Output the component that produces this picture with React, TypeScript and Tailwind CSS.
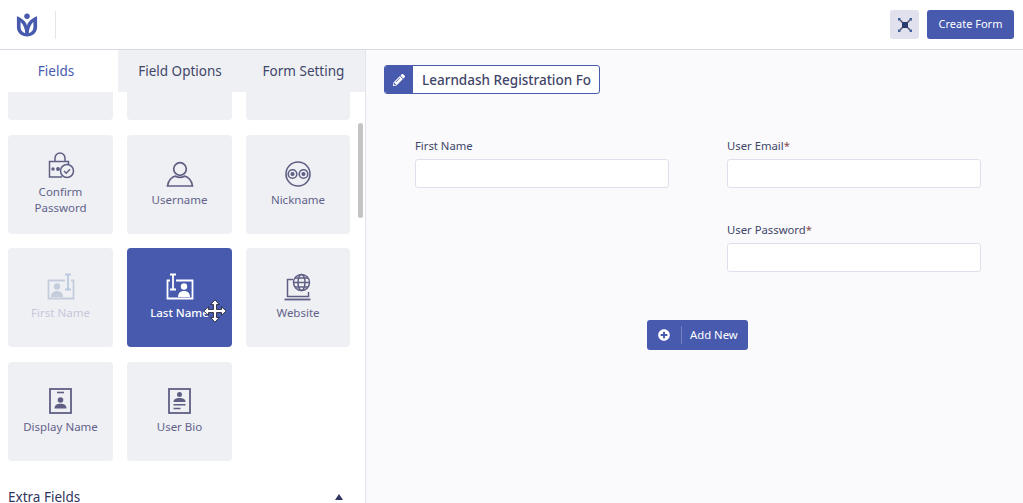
import React from "react";
import { FaPencilAlt, FaPlusCircle } from "react-icons/fa";

const stroke = "#5f5f85";

const ConfirmIcon = () => (
  <svg width="28" height="28" viewBox="0 0 28 28" fill="none" stroke={stroke} strokeWidth="1.5">
    <path d="M8 9V6a5 5 0 0 1 10 0v3" />
    <path d="M15 25H2.500V9.500h19v4" />
    <circle cx="6" cy="17" r="1" fill={stroke} />
    <circle cx="11" cy="17" r="1.200" fill={stroke} />
    <circle cx="20" cy="19" r="6.500" fill="#eff0f4" />
    <path d="M17 19l2.200 2.200 3.800-4" />
  </svg>
);

const UserIcon = () => (
  <svg width="28" height="28" viewBox="0 0 28 28" fill="none" stroke={stroke} strokeWidth="1.700">
    <circle cx="14" cy="9" r="6.300" />
    <path d="M1.500 26c.5-6 5-9.500 8-9.800 2.500 1.400 6.500 1.400 9 0 3 .3 7.500 3.800 8 9.800z" />
  </svg>
);

const NickIcon = () => (
  <svg width="28" height="28" viewBox="0 0 28 28" fill="none" stroke={stroke} strokeWidth="1.600">
    <circle cx="14" cy="14" r="12" />
    <circle cx="8.500" cy="14" r="4.300" />
    <circle cx="19.500" cy="14" r="4.300" />
    <circle cx="8.500" cy="14" r="1.300" fill={stroke} />
    <circle cx="19.500" cy="14" r="1.300" fill={stroke} />
  </svg>
);

const BadgeIcon = ({ color, bar, flip }: { color: string; bar: string; flip?: boolean }) => (
  <svg width="28" height="28" viewBox="0 0 28 28" fill="none" className={flip ? "-scale-x-100" : ""}>
    <path d="M4 7.500H1.500v18h25v-18H10" stroke={color} strokeWidth="1.800" />
    <path d="M4 1.500h6M7 1.500v15M4 16.500h6" stroke={bar} strokeWidth="1.800" />
    <circle cx="18" cy="13.500" r="3.200" fill={color} />
    <path d="M12 24c0-4 2.500-6 6-6s6 2 6 6z" fill={color} />
  </svg>
);

const WebsiteIcon = () => (
  <svg width="28" height="28" viewBox="0 0 28 28" fill="none" stroke={stroke} strokeWidth="1.500">
    <path d="M9 6.500H3.500v17h21V19" />
    <path d="M0.500 26.500h26" strokeWidth="1.800" />
    <circle cx="17.500" cy="9.500" r="8" fill="#eff0f4" />
    <ellipse cx="17.500" cy="9.500" rx="3.500" ry="8" />
    <path d="M9.500 9.500h16M11 5h13M11 14h13" />
  </svg>
);

const DisplayIcon = () => (
  <svg width="24" height="26" viewBox="0 0 24 26" fill="none">
    <rect x="1" y="1" width="21" height="24" stroke={stroke} strokeWidth="1.800" />
    <path d="M8 4.500h7" stroke={stroke} strokeWidth="1.600" />
    <circle cx="11.500" cy="12" r="2.800" fill={stroke} />
    <path d="M5.500 20.500c0-3.500 2.500-4.800 6-4.800s6 1.300 6 4.800z" fill={stroke} />
  </svg>
);

const BioIcon = () => (
  <svg width="24" height="26" viewBox="0 0 24 26" fill="none">
    <rect x="1" y="1" width="21" height="24" stroke={stroke} strokeWidth="1.800" />
    <circle cx="11.500" cy="6.500" r="2.500" fill={stroke} />
    <path d="M5.500 14c0-3 2.500-4 6-4s6 1 6 4z" fill={stroke} />
    <path d="M5.500 16.800h12M5.500 20.500h7" stroke={stroke} strokeWidth="1.600" />
  </svg>
);

const MoveCursor = () => (
  <svg width="24" height="24" viewBox="0 0 24 24" className="absolute left-[76px] top-[51px]">
    <path
      d="M12 .8l4.200 4.700h-2.700V10.500H18.500V7.800l4.700 4.200-4.700 4.200v-2.700H13.500V18.500h2.700L12 23.200l-4.200-4.700h2.700V13.500H5.500v2.700L.8 12l4.700-4.200v2.700H10.500V5.500H7.800z"
      fill="#fff"
      stroke="#1a1a2a"
      strokeWidth="0.800"
    />
  </svg>
);

const Card = ({
  label,
  icon,
  className = "",
  children,
}: {
  label: string;
  icon: React.ReactNode;
  className?: string;
  children?: React.ReactNode;
}) => (
  <div className={`relative flex h-[99px] flex-col items-center justify-center rounded bg-[#eff0f4] pb-[2px] text-center text-[11.500px] leading-4 text-[#62628a] ${className}`}>
    <div className="mb-1 flex h-7 items-center justify-center">{icon}</div>
    <span className="whitespace-pre-line">{label}</span>
    {children}
  </div>
);

const Field = ({ label, required }: { label: string; required?: boolean }) => (
  <div className="w-[254px]">
    <div className="mb-[5px] text-[11.300px] leading-[17px] text-[#3f4668]">
      {label}
      {required && <span className="text-[#8a4a4a]">*</span>}
    </div>
    <div className="h-[29px] rounded-[3px] border border-[#e0e0ec] bg-white" />
  </div>
);

const App = () => {
  return (
    <div className="flex h-[503px] w-[1023px] flex-col overflow-hidden bg-white font-['Noto_Sans',sans-serif]">
      <header className="z-10 flex h-[50px] shrink-0 items-center justify-between border-b border-[#d8d9e2] bg-white pr-[9px]">
        <div className="flex items-center">
          <svg width="22" height="25" viewBox="0 0 24 26" className="ml-[16px]">
            <circle cx="12" cy="4" r="3" fill="#475aae" />
            <path
              fillRule="evenodd"
              d="M1 4c3 1 6 3 8 5 1.500 1.600 3 4 3 6 0-2 1.500-4.400 3-6 2-2 5-4 8-5v12c0 6-5 10-11 10S1 22 1 16zM5 10v6c0 3 2 5.500 5 6.500 0-4-1-8-5-12.500zM19 10c-4 4.500-5 8.500-5 12.500 3-1 5-3.500 5-6.500z"
              fill="#475aae"
            />
          </svg>
          <div className="ml-[17px] h-7 w-px bg-[#e3e4ea]" />
        </div>
        <div className="flex items-center gap-[8px]">
          <div className="flex h-[29px] w-[29px] items-center justify-center rounded-[3px] bg-[#e0e1ec]">
            <svg width="16" height="16" viewBox="0 0 16 16" fill="none">
              <rect x="5" y="5" width="6" height="6" fill="#2b3a6b" />
              <path d="M2 2l3.500 3.500M14 2l-3.500 3.500M2 14l3.500-3.500M14 14l-3.500-3.500" stroke="#3f4668" strokeWidth="1.300" />
              <path d="M1 1h3L1 4zM15 1h-3l3 3zM1 15h3l-3-3zM15 15h-3l3-3z" fill="#3d62a8" />
            </svg>
          </div>
          <button className="h-[29px] w-[87px] rounded-[3px] bg-[#475aae] text-center text-[11px] text-white">
            Create Form
          </button>
        </div>
      </header>

      <div className="flex min-h-0 flex-1">
        <aside className="relative flex w-[366px] shrink-0 flex-col overflow-hidden border-r border-[#e3e4ea] bg-white">
          <div className="flex h-[42px] shrink-0 text-[13.500px] text-[#3f4668]">
            <div className="flex w-[118px] items-center justify-center pr-[6px] text-[#475aae]">Fields</div>
            <div className="flex w-[124px] items-center justify-center bg-[#eff0f4]">Field Options</div>
            <div className="flex flex-1 items-center justify-center bg-[#eff0f4]">Form Setting</div>
          </div>

          <div className="grid grid-cols-[105px_105px_104px] gap-x-[14px] gap-y-[14px] pl-2">
            <div className="mb-px h-[28px] rounded-b bg-[#eff0f4]" />
            <div className="mb-px h-[28px] rounded-b bg-[#eff0f4]" />
            <div className="mb-px h-[28px] rounded-b bg-[#eff0f4]" />
            <Card label={"Confirm\nPassword"} icon={<ConfirmIcon />} />
            <Card label="Username" icon={<UserIcon />} />
            <Card label="Nickname" icon={<NickIcon />} />
            <Card
              label="First Name"
              className="!text-[#c5c8da]"
              icon={<BadgeIcon color="#c5cddd" bar="#b9cadc" flip />}
            />
            <Card
              label="Last Name"
              className="!bg-[#475aae] font-medium !text-white"
              icon={<BadgeIcon color="#ffffff" bar="#ffffff" />}
            >
              <MoveCursor />
            </Card>
            <Card label="Website" icon={<WebsiteIcon />} />
            <Card label="Display Name" className="mt-px" icon={<DisplayIcon />} />
            <Card label="User Bio" className="mt-px" icon={<BioIcon />} />
          </div>

          <div className="mt-[26px] flex items-center justify-between pl-2 pr-[22px] text-[13.500px] leading-5 text-[#2f3560]">
            <span>Extra Fields</span>
            <span className="h-0 w-0 border-x-[4px] border-b-[6px] border-x-transparent border-b-[#2f3560]" />
          </div>

          <div className="absolute left-[358px] top-[73px] h-[95px] w-[5px] rounded-full bg-[#c4c4c4]" />
        </aside>

        <main className="min-w-0 flex-1 bg-[#fafafc] pl-[18px] pt-[15px]">
          <div className="flex h-[29px] w-[216px] overflow-hidden rounded-[3px] border border-[#475aae] bg-white">
            <div className="flex w-[28px] shrink-0 items-center justify-center bg-[#475aae]">
              <FaPencilAlt className="text-[12px] text-white" />
            </div>
            <div className="whitespace-nowrap pl-[9px] text-[13.500px] font-medium leading-[28px] text-[#3f4668]">
              Learndash Registration Fo
            </div>
          </div>

          <div className="ml-[31px] mt-[43px] flex gap-[58px]">
            <Field label="First Name" />
            <div className="flex flex-col gap-[33px]">
              <Field label="User Email" required />
              <Field label="User Password" required />
            </div>
          </div>

          <div className="ml-[263px] mt-[48px] flex h-[30px] w-[101px] items-center rounded-[3px] bg-[#475aae] text-[11.300px] text-white">
            <FaPlusCircle className="ml-[11px] text-[12px]" />
            <div className="ml-[11px] mr-[8px] h-[18px] w-px bg-[#7482c0]" />
            Add New
          </div>
        </main>
      </div>
    </div>
  );
};

export default App;
